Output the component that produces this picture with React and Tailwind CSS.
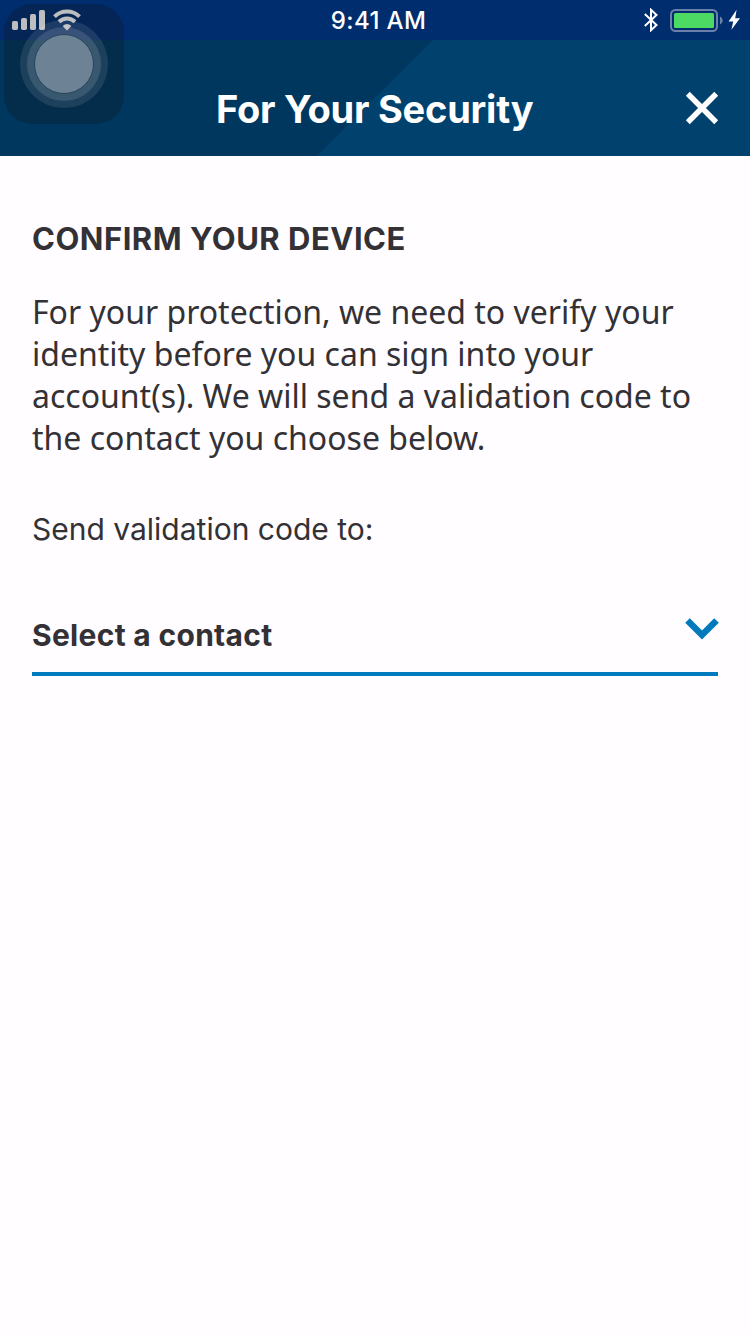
function StatusBar() {
  return (
    <div className="flex h-10 items-center bg-[#002d6e] text-white">
      <div className="flex h-10 w-[250px] items-start pl-3 pt-[9px]">
        <svg width="34" height="22" viewBox="0 0 34 22" fill="#fff">
          <rect x="0" y="12" width="6" height="9" rx="1.7" />
          <rect x="9" y="9" width="6" height="12" rx="1.7" />
          <rect x="18" y="5" width="6" height="16" rx="1.7" />
          <rect x="27" y="1" width="6" height="20" rx="1.7" />
        </svg>
        <svg className="ml-[7px]" width="28" height="22" viewBox="0 0 28 22" fill="none" stroke="#fff">
          <path d="M1.500 7.600a18 18 0 0 1 25 0" strokeWidth="4" />
          <path d="M6 12.800a11.500 11.500 0 0 1 16 0" strokeWidth="4" />
          <path d="M9.600 17q4.400-4 8.800 0L14 21.500z" fill="#fff" stroke="none" />
        </svg>
      </div>
      <div className="w-[257px] whitespace-nowrap pt-[2px] text-center font-['Inter',sans-serif] text-[24px] font-medium leading-10 tracking-[0.4px]">
        9:41 AM
      </div>
      <div className="flex h-10 flex-1 items-start pl-[137px] pt-2">
        <svg width="14" height="24" viewBox="0 0 14 24" fill="none" stroke="#fff" strokeWidth="2">
          <path d="M.8 6 12.500 17 7 22.200V1.800L12.500 7 .8 18" />
        </svg>
        <svg className="ml-3" width="53" height="24" viewBox="0 0 53 24">
          <rect x="1" y="2" width="46" height="21" rx="4.500" fill="none" stroke="#6b81aa" strokeWidth="2" />
          <rect x="4" y="5" width="40" height="15" rx="1.500" fill="#4cd964" />
          <path d="M50 8.500c3.500 1.500 3.500 6.500 0 8z" fill="#6b81aa" />
        </svg>
        <svg className="ml-[5px]" width="13" height="24" viewBox="0 0 13 24" fill="#fff">
          <path d="M8.600 1.800.6 13.400h4.600L3.400 21.800 12 10.200H7.200z" />
        </svg>
      </div>
    </div>
  );
}

function AssistiveTouch() {
  return (
    <div className="absolute left-1 top-1 flex size-[120px] items-center justify-center rounded-[28px] bg-[#0e1118]/28">
      <div className="flex size-[88px] items-center justify-center rounded-full bg-white/10">
        <div className="flex size-[74px] items-center justify-center rounded-full bg-white/12">
          <div className="size-[60px] rounded-full border border-[#25475f] bg-[#6d8294]" />
        </div>
      </div>
    </div>
  );
}

export default function App() {
  return (
    <main className="relative h-[1334px] w-[750px] overflow-hidden bg-[#fffdff] text-[#333135]">
      <StatusBar />
      <header className="flex h-[116px] items-start bg-[linear-gradient(135deg,#00375f_305.500px,#00416e_306px)] text-white">
        <h1 className="w-[660px] whitespace-nowrap pl-[216px] pt-[45px] font-['Inter',sans-serif] text-[38px] font-bold leading-[48px] tracking-[-0.23px]">
          For Your Security
        </h1>
        <button aria-label="Close" className="ml-6 mt-[50px]">
          <svg width="36" height="36" viewBox="0 0 36 36" fill="none" stroke="#fff" strokeWidth="5.500">
            <path d="M3.800 3.800l28.400 28.400M32.200 3.800 3.800 32.200" />
          </svg>
        </button>
      </header>
      <section className="flex flex-col px-8 pt-[63px]">
        <h2 className="whitespace-nowrap font-['Inter',sans-serif] text-[31px] font-bold leading-10 tracking-[0.5px]">
          CONFIRM YOUR DEVICE
        </h2>
        <p className="mt-8 whitespace-nowrap font-['Noto_Sans',sans-serif] text-[32px] leading-[42px]">
          For your protection, we need to verify your
          <br />
          identity before you can sign into your
          <br />
          account(s). We will send a validation code to
          <br />
          the contact you choose below.
        </p>
        <p className="mt-[50px] whitespace-nowrap font-['Inter',sans-serif] text-[30px] font-normal leading-10">
          Send validation code to:
        </p>
        <button className="mt-[66px] flex h-[61px] w-[686px] items-start justify-between border-b-4 border-[#007abc] text-left">
          <span className="whitespace-nowrap font-['Inter',sans-serif] text-[30px] font-bold leading-10 tracking-[0.3px]">
            Select a contact
          </span>
          <svg className="mt-[3px] -mr-px overflow-visible" width="34" height="24" viewBox="0 0 34 24" fill="none" stroke="#007abc" strokeWidth="6.500">
            <path d="M2.500 2.500 17 17 31.500 2.500" />
          </svg>
        </button>
      </section>
      <AssistiveTouch />
    </main>
  );
}
